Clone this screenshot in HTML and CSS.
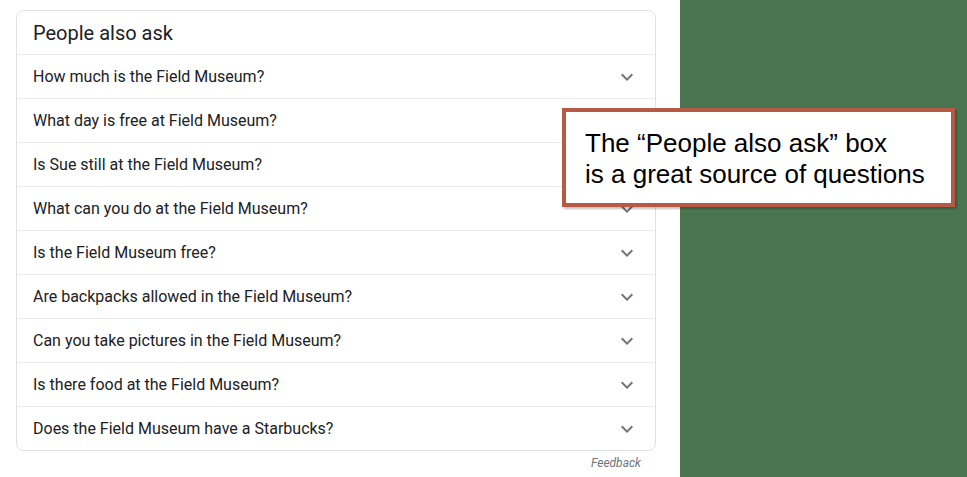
FILE: index.html
```html
<!DOCTYPE html>
<html lang="en">
<head>
<meta charset="utf-8">
<title>People also ask</title>
<link rel="stylesheet" href="styles.css">
</head>
<body>
<div class="page">
  <main class="left">
    <section class="paa">
      <div class="paa-head">People also ask</div>
      <div class="q"><span>How much is the Field Museum?</span><svg class="chev" viewBox="0 0 24 24"><path d="M16.59 8.59L12 13.17 7.41 8.59 6 10l6 6 6-6z"/></svg></div>
      <div class="q"><span>What day is free at Field Museum?</span><svg class="chev" viewBox="0 0 24 24"><path d="M16.59 8.59L12 13.17 7.41 8.59 6 10l6 6 6-6z"/></svg></div>
      <div class="q"><span>Is Sue still at the Field Museum?</span><svg class="chev" viewBox="0 0 24 24"><path d="M16.59 8.59L12 13.17 7.41 8.59 6 10l6 6 6-6z"/></svg></div>
      <div class="q"><span>What can you do at the Field Museum?</span><svg class="chev" viewBox="0 0 24 24"><path d="M16.59 8.59L12 13.17 7.41 8.59 6 10l6 6 6-6z"/></svg></div>
      <div class="q"><span>Is the Field Museum free?</span><svg class="chev" viewBox="0 0 24 24"><path d="M16.59 8.59L12 13.17 7.41 8.59 6 10l6 6 6-6z"/></svg></div>
      <div class="q"><span>Are backpacks allowed in the Field Museum?</span><svg class="chev" viewBox="0 0 24 24"><path d="M16.59 8.59L12 13.17 7.41 8.59 6 10l6 6 6-6z"/></svg></div>
      <div class="q"><span>Can you take pictures in the Field Museum?</span><svg class="chev" viewBox="0 0 24 24"><path d="M16.59 8.59L12 13.17 7.41 8.59 6 10l6 6 6-6z"/></svg></div>
      <div class="q"><span>Is there food at the Field Museum?</span><svg class="chev" viewBox="0 0 24 24"><path d="M16.59 8.59L12 13.17 7.41 8.59 6 10l6 6 6-6z"/></svg></div>
      <div class="q"><span>Does the Field Museum have a Starbucks?</span><svg class="chev" viewBox="0 0 24 24"><path d="M16.59 8.59L12 13.17 7.41 8.59 6 10l6 6 6-6z"/></svg></div>
    </section>
    <div class="feedback">Feedback</div>
  </main>
  <aside class="green"></aside>
  <div class="callout">The “People also ask” box<br>is a great source of questions</div>
</div>
</body>
</html>
```

FILE: styles.css
```css
html, body {
  margin: 0;
  padding: 0;
  background: #ffffff;
}
.page {
  position: relative;
  display: flex;
  width: 967px;
  height: 477px;
  overflow: hidden;
}
.left {
  width: 680px;
  box-sizing: border-box;
  padding: 10px 24px 0 16px;
  font-family: Roboto, "Liberation Sans", Arial, sans-serif;
  color: #202124;
}
.green {
  flex: 1;
  background: #4b7550;
}
.paa {
  border: 1px solid #dfe1e5;
  border-radius: 8px;
  background: #fff;
}
.paa-head {
  height: 43px;
  display: flex;
  align-items: center;
  padding: 0 16px;
  font-size: 20px;
  line-height: 26px;
  color: #202124;
}
.q {
  height: 43px;
  border-top: 1px solid #e8eaed;
  display: flex;
  align-items: center;
  justify-content: space-between;
  padding: 0 16px;
  font-size: 16px;
  line-height: 22px;
}
.chev {
  width: 24px;
  height: 24px;
  fill: #70757a;
  flex: none;
}
.feedback {
  text-align: right;
  padding: 4px 15px 0 0;
  font-size: 12px;
  line-height: 16px;
  font-style: italic;
  color: #70757a;
}
.callout {
  position: absolute;
  left: 562px;
  top: 108px;
  width: 393px;
  height: 99px;
  box-sizing: border-box;
  border: 4px solid #b65a45;
  background: #ffffff;
  box-shadow: 2px 2px 2px rgba(0, 0, 0, 0.25);
  padding: 16px 0 0 19px;
  font-family: "Liberation Sans", Arial, sans-serif;
  font-size: 26px;
  line-height: 31px;
  color: #000;
}
```
